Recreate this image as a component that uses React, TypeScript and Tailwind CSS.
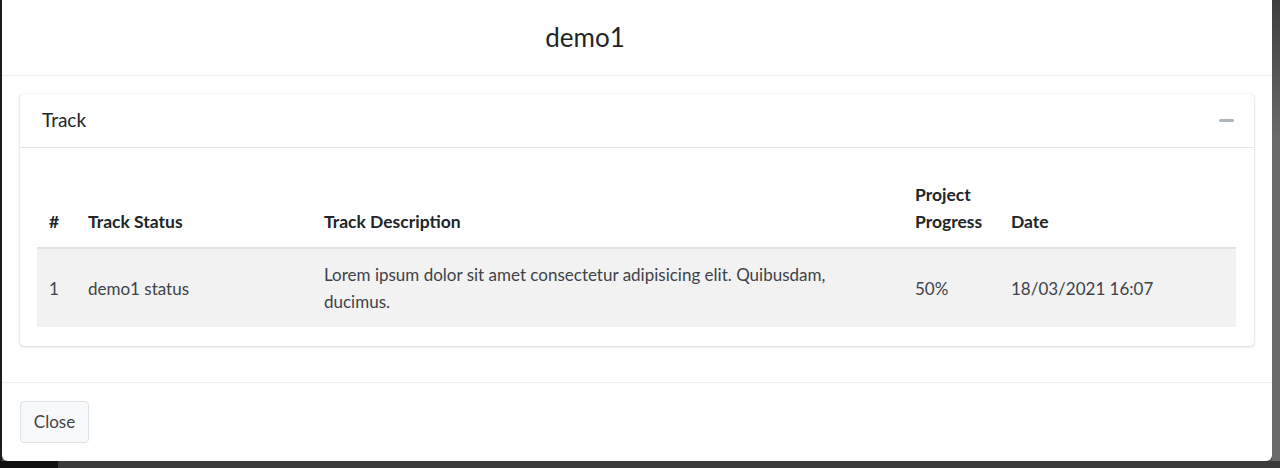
const rows = [
  {
    id: 1,
    status: "demo1 status",
    description: ["Lorem ipsum dolor sit amet consectetur adipisicing elit. Quibusdam,", "ducimus."],
    progress: "50%",
    date: "18/03/2021 16:07",
  },
];

const TrackTable = () => {
  return (
    <table className="w-full border-collapse table-fixed text-[17px] leading-[27px]">
      <colgroup>
        <col className="w-[39px]" />
        <col className="w-[236px]" />
        <col className="w-[591px]" />
        <col className="w-[96px]" />
        <col />
      </colgroup>
      <thead>
        <tr className="border-b-2 border-[#dee2e6] text-[#212529] text-[17.5px]">
          <th className="px-3 py-3 text-left align-bottom font-bold">#</th>
          <th className="px-3 py-3 text-left align-bottom font-bold">Track Status</th>
          <th className="px-3 py-3 text-left align-bottom font-bold">Track Description</th>
          <th className="px-3 py-3 text-left align-bottom font-bold whitespace-nowrap">
            Project
            <br />
            Progress
          </th>
          <th className="px-3 py-3 text-left align-bottom font-bold">Date</th>
        </tr>
      </thead>
      <tbody>
        {rows.map((row) => (
          <tr key={row.id} className="bg-[#f2f2f2] text-[#3d4349]">
            <td className="px-3 py-3 align-middle">{row.id}</td>
            <td className="px-3 py-3 align-middle">{row.status}</td>
            <td className="px-3 py-3 align-middle">
              {row.description[0]}
              <br />
              {row.description[1]}
            </td>
            <td className="px-3 py-3 align-middle">{row.progress}</td>
            <td className="px-3 py-3 align-middle whitespace-nowrap">{row.date}</td>
          </tr>
        ))}
      </tbody>
    </table>
  );
};

const TrackCard = () => {
  return (
    <div className="rounded bg-white shadow-[0_0_1px_rgba(0,0,0,0.2),0_1px_3px_rgba(0,0,0,0.15)]">
      <div className="flex items-center justify-between h-[54px] pl-[22px] pr-[20px] border-b border-[#e5e7ea]">
        <span className="text-[19px] text-[#212529]">Track</span>
        <span className="block w-[15px] h-[3px] rounded-sm bg-[#adb5bd]"></span>
      </div>
      <div className="pl-[17px] pr-[18px] pt-[21px] pb-[19px]">
        <TrackTable />
      </div>
    </div>
  );
}

export default function App() {
  return (
    <div className="h-[468px] w-full overflow-hidden bg-[#5a5a5a] font-['Lato','Liberation_Sans',sans-serif]">
      <div className="flex h-[461px]">
        <div className="w-[2px] bg-[#1c1c1c]"></div>
        <div className="flex w-[1270px] flex-col rounded-b-md bg-white">
          <div className="flex h-[76px] items-center justify-center pr-[104px] border-b border-[#eceef0]">
            <h4 className="text-[26px] text-[#212529]">demo1</h4>
          </div>
          <div className="px-[18px] pt-[18px] pb-[36px] border-b border-[#eceef0]">
            <TrackCard />
          </div>
          <div className="flex flex-1 items-center px-[18px]">
            <button className="h-[42px] w-[69px] rounded border border-[#dfe2e5] bg-[#f8f9fa] text-[17px] text-[#444]">
              Close
            </button>
          </div>
        </div>
        <div className="flex-1 bg-[linear-gradient(#3e3e3e,#6a6a6a_30%,#6a6a6a)]"></div>
      </div>
      <div className="flex h-[7px]">
        <div className="w-[58px] bg-[#111]"></div>
        <div className="flex-1 bg-[#3b3b3b]"></div>
      </div>
    </div>
  );
}
